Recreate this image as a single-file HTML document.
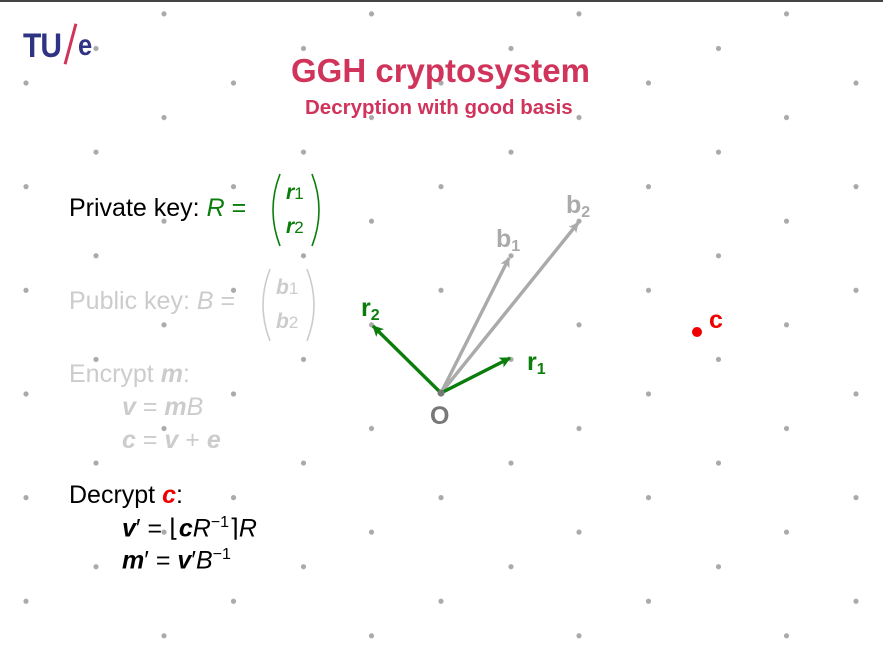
<!DOCTYPE html>
<html><head><meta charset="utf-8"><style>
html,body{margin:0;padding:0;background:#fff;}
body{width:883px;height:662px;position:relative;overflow:hidden;font-family:"Liberation Sans",sans-serif;}
.t{position:absolute;white-space:nowrap;line-height:1;}
.i{font-style:italic;}
.b{font-weight:bold;}
</style></head><body>
<div style="position:absolute;left:0;top:0;width:883px;height:2px;background:#444"></div>
<svg width="883" height="662" style="position:absolute;left:0;top:0">
<defs>
<pattern id="p" patternUnits="userSpaceOnUse" x="26" y="83" width="207.5" height="103.65">
<g fill="#aaa">
<circle cx="0" cy="0" r="2.6"/><circle cx="207.5" cy="0" r="2.6"/><circle cx="0" cy="103.65" r="2.6"/><circle cx="207.5" cy="103.65" r="2.6"/>
<circle cx="138" cy="34.55" r="2.6"/><circle cx="70" cy="69.1" r="2.6"/>
</g></pattern>
<marker id="ag" markerWidth="10" markerHeight="10" refX="9" refY="5" orient="auto" markerUnits="userSpaceOnUse"><path d="M0,0 L10,5 L0,10 L2.5,5z" fill="#aaa"/></marker>
<marker id="ar" markerWidth="11" markerHeight="11" refX="10" refY="5.5" orient="auto" markerUnits="userSpaceOnUse"><path d="M0,0 L11,5.5 L0,11 L2.5,5.5z" fill="#0a7d0a"/></marker>
</defs>
<rect x="0" y="4" width="883" height="658" fill="url(#p)"/>
<g stroke="#aaa" stroke-width="3.4" fill="none">
<line x1="441" y1="393" x2="509" y2="258" marker-end="url(#ag)"/>
<line x1="441" y1="393" x2="578" y2="223" marker-end="url(#ag)"/>
</g>
<g stroke="#0a7d0a" stroke-width="3.4" fill="none">
<line x1="441" y1="393" x2="510" y2="358" marker-end="url(#ar)"/>
<line x1="441" y1="393" x2="373" y2="326" marker-end="url(#ar)"/>
</g>
<circle cx="441" cy="393" r="3.5" fill="#777"/>
<circle cx="697" cy="332" r="5" fill="#e00"/>
<g font-family="Liberation Sans, sans-serif" font-weight="bold">
<text x="496" y="247" fill="#aaa" font-size="25">b<tspan font-size="16" dy="4">1</tspan></text>
<text x="566" y="213" fill="#aaa" font-size="25">b<tspan font-size="16" dy="4">2</tspan></text>
<text x="361" y="316" fill="#0a7d0a" font-size="25">r<tspan font-size="16" dy="4">2</tspan></text>
<text x="527" y="370" fill="#0a7d0a" font-size="25">r<tspan font-size="16" dy="4">1</tspan></text>
<text x="430" y="424" fill="#777" font-size="25">O</text>
<text x="709" y="328" fill="#e00" font-size="25">c</text>
</g>
<path d="M280,174 Q266,210 280,246" stroke="#0a7d0a" stroke-width="1.6" fill="none"/>
<path d="M312,174 Q326,210 312,246" stroke="#0a7d0a" stroke-width="1.6" fill="none"/>
<path d="M270,269 Q256,305 270,341" stroke="#ccc" stroke-width="1.6" fill="none"/>
<path d="M307,269 Q321,305 307,341" stroke="#ccc" stroke-width="1.6" fill="none"/>
</svg>
<div class="t b" style="left:23px;top:29px;font-size:34px;color:#2e3483;letter-spacing:-1px;transform:scaleX(0.88);transform-origin:left top">TU</div>
<div style="position:absolute;left:69px;top:23px;width:3px;height:42px;background:#d1345b;transform:rotate(15deg)"></div>
<div class="t b" style="left:78px;top:31px;font-size:30px;color:#2e3483;transform:scaleX(0.85);transform-origin:left top">e</div>
<div class="t b" style="left:291px;top:54px;font-size:33px;color:#d1345b">GGH cryptosystem</div>
<div class="t b" style="left:305px;top:98px;font-size:20.5px;color:#d1345b">Decryption with good basis</div>
<div class="t" style="left:69px;top:196px;font-size:25px;color:#000">Private key: <span class="i" style="color:#0a7d0a">R</span> <span style="color:#0a7d0a">=</span></div>
<div class="t i b" style="left:286px;top:182px;font-size:21px;color:#0a7d0a">r<span style="font-style:normal;font-weight:normal;font-size:17px">1</span></div>
<div class="t i b" style="left:286px;top:216px;font-size:21px;color:#0a7d0a">r<span style="font-style:normal;font-weight:normal;font-size:17px">2</span></div>
<div class="t" style="left:69px;top:289px;font-size:25px;color:#ccc">Public key: <span class="i">B</span> =</div>
<div class="t i b" style="left:276px;top:277px;font-size:21px;color:#ccc">b<span style="font-style:normal;font-weight:normal;font-size:17px">1</span></div>
<div class="t i b" style="left:276px;top:311px;font-size:21px;color:#ccc">b<span style="font-style:normal;font-weight:normal;font-size:17px">2</span></div>
<div class="t" style="left:69px;top:362px;font-size:25px;color:#ccc">Encrypt <b class="i">m</b>:</div>
<div class="t" style="left:122px;top:395px;font-size:25px;color:#ccc"><b class="i">v</b> = <b class="i">m</b><span class="i">B</span></div>
<div class="t" style="left:122px;top:428px;font-size:25px;color:#ccc"><b class="i">c</b> = <b class="i">v</b> + <b class="i">e</b></div>
<div class="t" style="left:69px;top:483px;font-size:25px;color:#000">Decrypt <b class="i" style="color:#e00">c</b>:</div>
<div class="t" style="left:122px;top:515px;font-size:25px;color:#000"><b class="i">v</b>′ = ⌊<b class="i">c</b><span class="i">R</span><sup style="font-size:16px">−1</sup>⌉<span class="i">R</span></div>
<div class="t" style="left:122px;top:547px;font-size:25px;color:#000"><b class="i">m</b>′ = <b class="i">v</b>′<span class="i">B</span><sup style="font-size:16px">−1</sup></div>
</body></html>
